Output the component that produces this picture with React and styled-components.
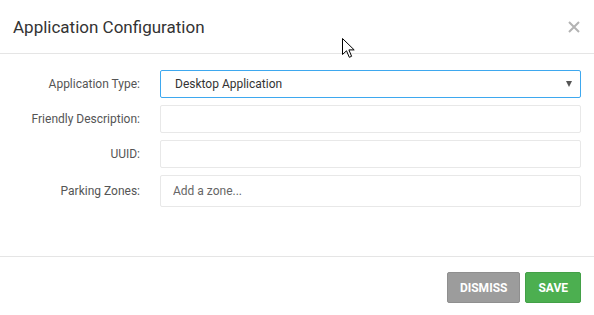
import styled, { createGlobalStyle } from "styled-components";

const GlobalStyle = createGlobalStyle`
  html, body {
    margin: 0;
    padding: 0;
    background: #fff;
  }
  body {
    font-family: Roboto, "Liberation Sans", Arial, sans-serif;
    color: #333;
  }
  * {
    box-sizing: border-box;
  }
`;

const fields = [
  { label: "Application Type:", kind: "select", value: "Desktop Application" },
  { label: "Friendly Description:", kind: "input" },
  { label: "UUID:", kind: "input" },
  { label: "Parking Zones:", kind: "tags", placeholder: "Add a zone..." },
];

const App = () => {
  return (
    <>
      <GlobalStyle />
      <Modal>
        <Header>
          <Title>Application Configuration</Title>
          <Close aria-label="close">
            <svg width="12" height="12" viewBox="0 0 12 12">
              <path
                d="M1 1 L11 11 M11 1 L1 11"
                stroke="#b3b3b3"
                strokeWidth="2"
                fill="none"
              />
            </svg>
          </Close>
        </Header>
        <Body>
          {fields.map((f) => (
            <Row key={f.label}>
              <Label>{f.label}</Label>
              {f.kind === "select" && (
                <Select>
                  <span>{f.value}</span>
                  <Caret />
                </Select>
              )}
              {f.kind === "input" && <Input type="text" />}
              {f.kind === "tags" && <Input type="text" $tall placeholder={f.placeholder} />}
            </Row>
          ))}
        </Body>
        <Footer>
          <Button $color="#9c9c9c" $border="#8f8f8f">Dismiss</Button>
          <Button $color="#4caf50" $border="#43a047">Save</Button>
        </Footer>
        <Pointer width="14" height="20" viewBox="0 0 14 20">
          <path
            d="M0.5 0.5 L0.5 16.5 L4.5 12.8 L7.3 19.3 L9.6 18.3 L6.9 11.9 L12.2 11.9 Z"
            fill="#fff"
            stroke="#000"
            strokeWidth="1"
            strokeLinejoin="miter"
          />
        </Pointer>
      </Modal>
    </>
  );
};

const Modal = styled.div`
  position: relative;
  width: 594px;
  height: 315px;
  background: #fff;
  overflow: hidden;
`;

const Header = styled.div`
  display: flex;
  align-items: center;
  justify-content: space-between;
  height: 54px;
  padding: 0 14px 0 13px;
  border-bottom: 1px solid #e5e5e5;
`;

const Title = styled.h4`
  margin: 0;
  font-size: 17px;
  font-weight: 400;
  color: #333;
  line-height: 1;
  padding-top: 1px;
`;

const Close = styled.div`
  display: flex;
  width: 12px;
  height: 12px;
`;

const Body = styled.div`
  display: flex;
  flex-direction: column;
  gap: 7px;
  padding: 16px 13px 49px;
`;

const Row = styled.div`
  display: grid;
  grid-template-columns: 127px 1fr;
  column-gap: 20px;
  align-items: center;
`;

const Label = styled.label`
  text-align: right;
  font-size: 12px;
  color: #555;
`;

const Select = styled.div`
  display: flex;
  align-items: center;
  justify-content: space-between;
  height: 28px;
  padding: 0 8px 0 14px;
  border: 1px solid #3ea8ef;
  border-radius: 2px;
  font-size: 12px;
  color: #333;
`;

const Caret = styled.span`
  width: 0;
  height: 0;
  border-left: 3.5px solid transparent;
  border-right: 3.5px solid transparent;
  border-top: 6px solid #555;
  margin-top: -1px;
`;

const Input = styled.input`
  height: ${(p) => (p.$tall ? "32px" : "28px")};
  padding: 0 12px;
  border: 1px solid #e8e8e8;
  border-radius: 2px;
  font-family: inherit;
  font-size: 12px;
  color: #333;
  outline: none;
  &::placeholder {
    color: #666;
  }
`;

const Footer = styled.div`
  display: flex;
  justify-content: flex-end;
  gap: 5px;
  padding: 15px 13px 12px;
  border-top: 1px solid #e5e5e5;
`;

const Button = styled.button`
  height: 31px;
  padding: 0 12px;
  border: 1px solid ${(p) => p.$border};
  border-radius: 2px;
  background: ${(p) => p.$color};
  color: #fff;
  font-family: inherit;
  font-size: 12px;
  font-weight: 700;
  text-transform: uppercase;
`;

const Pointer = styled.svg`
  position: absolute;
  left: 342px;
  top: 38px;
`;

export default App;
